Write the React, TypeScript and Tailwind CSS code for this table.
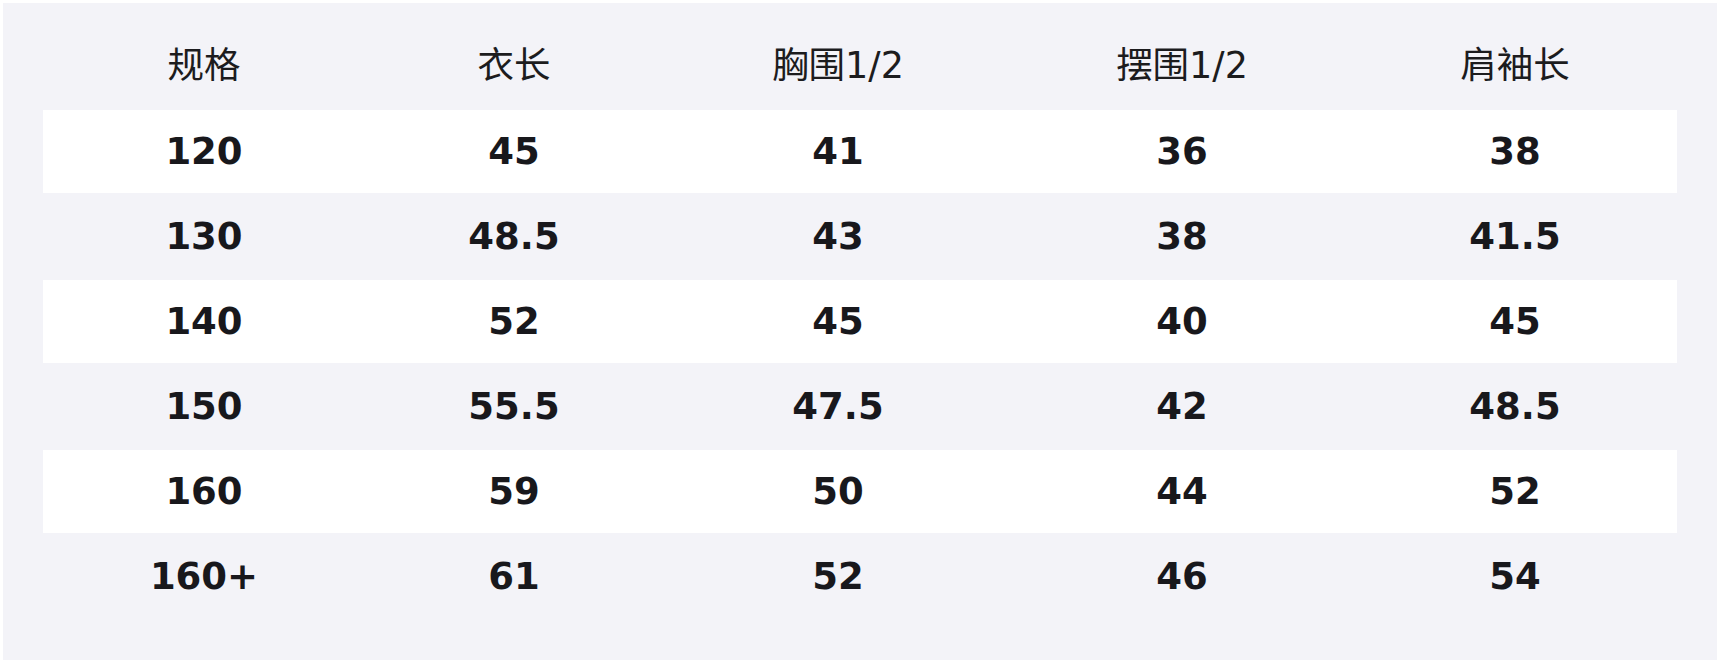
import React from "react";

const headers = ["规格", "衣长", "胸围1/2", "摆围1/2", "肩袖长"];
const rows = [
  ["120", "45", "41", "36", "38"],
  ["130", "48.5", "43", "38", "41.5"],
  ["140", "52", "45", "40", "45"],
  ["150", "55.5", "47.5", "42", "48.5"],
  ["160", "59", "50", "44", "52"],
  ["160+", "61", "52", "46", "54"],
];

const font = { fontFamily: '"DejaVu Sans", "Noto Sans CJK SC", sans-serif' };

export default function App() {
  return (
    <div className="w-full h-[663px] bg-white p-[3px]" style={font}>
      <div className="h-[657px] w-full bg-[#f3f3f8] px-[40px] pt-[21px]">
        <div className="grid grid-cols-[320px_300px_348px_340px_326px] h-[85px] items-center text-[36.5px] leading-none text-[#1c1c1e]">
          {headers.map((h) => (
            <div key={h} className="text-center pl-[2px]">{h}</div>
          ))}
        </div>
        {rows.map((r, i) => (
          <div
            key={i}
            className={
              i % 2 === 0
                ? "grid grid-cols-[320px_300px_348px_340px_326px] h-[85px] items-center border-y border-[#f3f3f8] bg-white text-[37px] leading-none font-bold text-[#18181c]"
                : "grid grid-cols-[320px_300px_348px_340px_326px] h-[85px] items-center text-[37px] leading-none font-bold text-[#18181c]"
            }
          >
            {r.map((c, j) => (
              <div key={j} className="text-center pl-[2px]">{c}</div>
            ))}
          </div>
        ))}
      </div>
    </div>
  );
}
